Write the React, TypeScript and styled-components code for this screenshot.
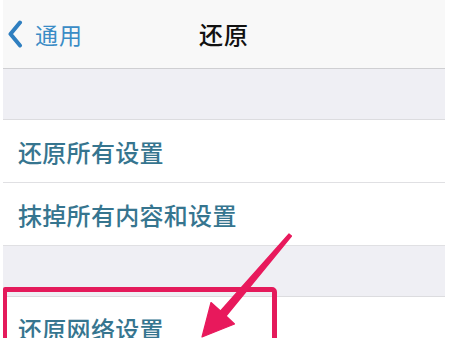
import styled, { createGlobalStyle } from "styled-components";

const GlobalStyle = createGlobalStyle`
  html, body {
    margin: 0;
    padding: 0;
    background: #ffffff;
    overflow: hidden;
  }
  body {
    font-family: "Noto Sans CJK SC", "Noto Sans", sans-serif;
  }
`

const Pagina = styled.div`
  position: relative;
  width: 450px;
  height: 338px;
  overflow: hidden;
  background: #ffffff;
`

const Tela = styled.div`
  margin-left: 3px;
  width: 442px;
  display: flex;
  flex-direction: column;
`

const BarraNav = styled.div`
  height: 68px;
  background: #f8f8f8;
  border-bottom: 1px solid #cfcfd2;
  display: grid;
  grid-template-columns: 1fr auto 1fr;
  align-items: center;
`

const Voltar = styled.div`
  display: flex;
  align-items: center;
  gap: 12px;
  padding-left: 4px;
  color: #3a8cc6;
  font-size: 23px;
  letter-spacing: 1px;
`

const Titulo = styled.div`
  color: #111111;
  font-size: 24px;
  font-weight: 500;
  letter-spacing: 1px;
  padding-bottom: 2px;
`

const Secao = styled.div<{ $altura: number }>`
  height: ${(p) => p.$altura}px;
  background: #efeff4;
  border-bottom: 1px solid #dcdcdf;
`

const Linha = styled.div<{ $ultima?: boolean }>`
  height: 62px;
  display: flex;
  align-items: center;
  padding-left: 15px;
  background: #ffffff;
  border-bottom: ${(p) => (p.$ultima ? "none" : "1px solid #e0e0e3")};
  color: #36758f;
  font-size: 24px;
  font-weight: 500;
  letter-spacing: 0.3px;
`

const Moldura = styled.div`
  position: absolute;
  left: 3px;
  top: 287px;
  width: 265px;
  height: 80px;
  border: 5px solid #e41a5b;
  border-left-width: 4px;
  border-radius: 2px 5px 0 0;
`

const Seta = styled.svg`
  position: absolute;
  left: 0;
  top: 0;
  pointer-events: none;
`

export default function App() {
  return (
    <>
      <GlobalStyle />
      <Pagina>
        <Tela>
          <BarraNav>
            <Voltar>
              <svg width="16" height="28" viewBox="0 0 16 28">
                <path d="M13 2.5 L3.5 14 L13 25.5" fill="none" stroke="#2f7fc0" strokeWidth="4" strokeLinecap="round" strokeLinejoin="round" />
              </svg>
              通用
            </Voltar>
            <Titulo>还原</Titulo>
            <div />
          </BarraNav>
          <Secao $altura={50} />
          <Linha>还原所有设置</Linha>
          <Linha>抹掉所有内容和设置</Linha>
          <Secao $altura={50} />
          <Linha $ultima>还原网络设置</Linha>
        </Tela>
        <Moldura />
        <Seta width="450" height="338" viewBox="0 0 450 338">
          <path
            d="M289 234 L291.5 236 L226 316 L234.5 324 L202 337 L211 302.5 L220.5 311 Z"
            fill="#e8195c"
            stroke="#e8195c"
            strokeWidth="1.2"
            strokeLinejoin="round"
          />
        </Seta>
      </Pagina>
    </>
  )
}
